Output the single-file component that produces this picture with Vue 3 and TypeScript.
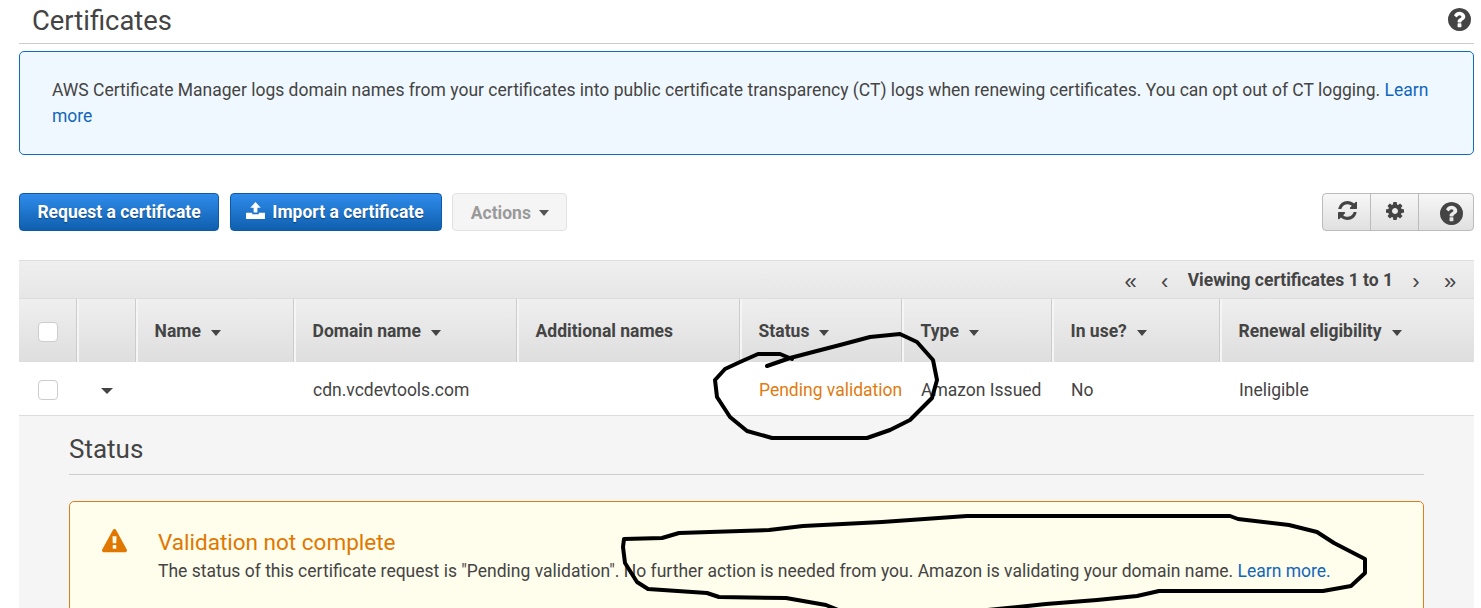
<script setup lang="ts">
// Table columns, the first two have no label
interface Column {
  label: string
  sortable: boolean
}

const columns: Column[] = [
  { label: 'Name', sortable: true },
  { label: 'Domain name', sortable: true },
  { label: 'Additional names', sortable: false },
  { label: 'Status', sortable: true },
  { label: 'Type', sortable: true },
  { label: 'In use?', sortable: true },
  { label: 'Renewal eligibility', sortable: true },
]

const helpPath = 'M1024 1376v-192q0-14-9-23t-23-9h-192q-14 0-23 9t-9 23v192q0 14 9 23t23 9h192q14 0 23-9t9-23zm256-672q0-88-55.5-163t-138.5-116-170-41q-243 0-371 213-15 24 8 42l132 100q7 6 19 6 16 0 25-12 53-68 86-92 34-24 86-24 48 0 85.5 26t37.5 59q0 38-20 61t-68 45q-63 28-115.5 86.5t-52.5 125.5v36q0 14 9 23t23 9h192q14 0 23-9t9-23q0-19 21.5-49.5t54.5-49.5q32-18 49-28.5t46-35 44.5-48 28-60.5 12.5-81zm384 192q0 209-103 385.5t-279.5 279.5-385.5 103-385.5-103-279.5-279.5-103-385.5 103-385.5 279.5-279.5 385.5-103 385.5 103 279.5 279.5 103 385.5z'

// Hand drawn marks on top of the screenshot
const statusMark = 'M767 366 L790 358 L813 352 L840 345 L870 337 L900 334 L917 342 L933 360 L937 380 L932 398 L910 420 L890 430 L867 438 L833 438 L772 438 L747 431 L730 417 L717 397 L715 380 L725 369 L740 362 L758 354 L780 354 L792 359'
const messageMark = 'M624 539 L662 538 L679 533 L769 530 L803 526 L882 522 L967 516 L1230 516 L1238 519 L1289 525 L1317 532 L1334 543 L1365 559 L1365 573 L1351 586 L1323 591 L1159 591 L1137 596 L1097 600 L1046 604 L1018 607 L967 612 L843 612 L826 605 L786 598 L719 597 L707 593 L648 589 L637 582 L625 563 L623 547 Z'
</script>

<template>
  <div class="page">
    <header class="page-title">
      <h1>Certificates</h1>
      <svg class="title-help" viewBox="128 128 1536 1536"><path :d="helpPath" /></svg>
    </header>

    <div class="info-box">
      AWS Certificate Manager logs domain names from your certificates into public certificate transparency (CT) logs when renewing certificates. You can opt out of CT logging. <a>Learn more</a>
    </div>

    <div class="toolbar">
      <button class="btn primary request">Request a certificate</button>
      <button class="btn primary import">
        <svg class="upload" viewBox="0 0 20 18">
          <path d="M10 0 L15.5 6 H12 V11 H8 V6 H4.5 Z" />
          <path d="M0 11.5 H6.5 V13 H13.5 V11.5 H20 V18 H0 Z" />
        </svg>
        Import a certificate
      </button>
      <button class="btn disabled">Actions <span class="caret"></span></button>
      <div class="tool-group">
        <button class="tool refresh">
          <svg viewBox="128 128 1536 1536"><path d="M1639 1056q0 5-1 7-64 268-268 434.5t-478 166.5q-146 0-282.5-55t-243.5-157l-129 129q-19 19-45 19t-45-19-19-45v-448q0-26 19-45t45-19h448q26 0 45 19t19 45-19 45l-137 137q71 66 161 102t187 36q134 0 250-65t186-179q11-17 53-117 8-23 30-23h192q13 0 22.5 9.5t9.5 22.5zm25-800v448q0 26-19 45t-45 19h-448q-26 0-45-19t-19-45 19-45l138-138q-148-137-349-137-134 0-250 65t-186 179q-11 17-53 117-8 23-30 23h-199q-13 0-22.5-9.5t-9.5-22.5v-7q65-268 270-434.5t480-166.5q146 0 284 55.5t245 156.5l130-129q19-19 45-19t45 19 19 45z" /></svg>
        </button>
        <button class="tool cog">
          <svg viewBox="128 128 1536 1536"><path d="M1152 896q0-106-75-181t-181-75-181 75-75 181 75 181 181 75 181-75 75-181zm512-109v222q0 12-8 23t-20 13l-185 28q-19 54-39 91 35 50 107 138 10 12 10 25t-9 23q-27 37-99 108t-94 71q-12 0-26-9l-138-108q-44 23-91 38-16 136-29 186-7 28-36 28h-222q-14 0-24.5-8.5t-11.5-21.5l-28-184q-49-16-90-37l-141 107q-10 9-25 9-14 0-25-11-126-114-165-168-7-10-7-23 0-12 8-23 15-21 51-66.5t54-70.5q-27-50-41-99l-183-27q-13-2-21-12.5t-8-23.5v-222q0-12 8-23t19-13l186-28q14-46 39-92-40-57-107-138-10-12-10-24 0-10 9-23 26-36 98.5-107.5t94.5-71.5q13 0 26 10l138 107q44-23 91-38 16-136 29-186 7-28 36-28h222q14 0 24.5 8.5t11.5 21.5l28 184q49 16 90 37l142-107q9-9 24-9 13 0 25 10 129 119 165 170 7 8 7 22 0 12-8 23-15 21-51 66.5t-54 70.5q26 50 41 98l183 28q13 2 21 12.5t8 23.5z" /></svg>
        </button>
        <button class="tool help">
          <svg viewBox="128 128 1536 1536"><path :d="helpPath" /></svg>
        </button>
      </div>
    </div>

    <div class="table">
      <div class="pager">
        <span class="page-arrow first">«</span>
        <span class="page-arrow">‹</span>
        <span class="page-label">Viewing certificates 1 to 1</span>
        <span class="page-arrow next">›</span>
        <span class="page-arrow">»</span>
      </div>

      <div class="row head">
        <div class="cell check"><span class="checkbox"></span></div>
        <div class="cell"></div>
        <div v-for="col in columns" :key="col.label" class="cell label">
          {{ col.label }}<span v-if="col.sortable" class="caret"></span>
        </div>
      </div>

      <div class="row body">
        <div class="cell check"><span class="checkbox"></span></div>
        <div class="cell expand"><span class="caret"></span></div>
        <div class="cell"></div>
        <div class="cell">cdn.vcdevtools.com</div>
        <div class="cell"></div>
        <div class="cell pending">Pending validation</div>
        <div class="cell">Amazon Issued</div>
        <div class="cell">No</div>
        <div class="cell">Ineligible</div>
      </div>

      <div class="detail">
        <h2>Status</h2>
        <div class="alert">
          <svg class="warn" viewBox="0 0 1792 1792"><path d="M1024 1375v-190q0-14-9.5-23.5t-22.5-9.5h-192q-13 0-22.5 9.5t-9.5 23.5v190q0 14 9.5 23.5t22.5 9.5h192q13 0 22.5-9.5t9.5-23.5zm-2-374l18-459q0-12-10-19-13-11-24-11h-220q-11 0-24 11-10 7-10 21l17 457q0 10 10 16.5t24 6.5h185q14 0 23.5-6.5t10.5-16.5zm-14-934l768 1408q35 63-2 126-17 29-46.5 46t-63.5 17h-1536q-34 0-63.5-17t-46.5-46q-37-63-2-126l768-1408q17-31 47-49t65-18 65 18 47 49z" /></svg>
          <div class="alert-text">
            <h3>Validation not complete</h3>
            <p>The status of this certificate request is "Pending validation". No further action is needed from you. Amazon is validating your domain name. <a>Learn more.</a></p>
          </div>
        </div>
      </div>
    </div>

    <svg class="marks" viewBox="0 0 1481 608">
      <path :d="statusMark" />
      <path :d="messageMark" />
    </svg>
  </div>
</template>

<style scoped>
.page {
  position: relative;
  box-sizing: border-box;
  height: 608px;
  overflow: hidden;
  padding: 0 7px 0 19px;
  background: #fff;
  font-family: Roboto, "Liberation Sans", sans-serif;
  font-size: 17.5px;
  color: #444;
}

.page-title {
  display: flex;
  justify-content: space-between;
  align-items: center;
  box-sizing: border-box;
  height: 44px;
  padding: 0 3px 1px 13px;
  border-bottom: 1px solid #ccc;
}

.page-title h1 {
  margin: 0;
  font-size: 27.4px;
  font-weight: 400;
  line-height: 40px;
  color: #444;
}

.title-help {
  width: 23px;
  height: 23px;
  margin-bottom: 3px;
  fill: #444;
}

.info-box {
  box-sizing: border-box;
  height: 104px;
  margin-top: 7px;
  padding: 25px 32px 0;
  background: #f0f8ff;
  border: 1px solid #0f6cb8;
  border-radius: 5px;
  line-height: 26px;
}

a {
  color: #1166bb;
}

.toolbar {
  display: flex;
  align-items: flex-start;
  margin-top: 38px;
  height: 67px;
}

.btn {
  box-sizing: border-box;
  height: 38px;
  border-radius: 4px;
  font: 700 17.5px Roboto, sans-serif;
  padding: 0;
}

.primary {
  color: #fff;
  background: linear-gradient(#2f8ceb, #0f5fae);
  border: 1px solid #0e5aa5;
  text-shadow: 0 1px 1px rgba(0, 0, 0, 0.4);
}

.request {
  width: 200px;
}

.import {
  width: 212px;
  margin-left: 11px;
  display: flex;
  align-items: center;
  justify-content: center;
  gap: 7px;
  padding-right: 2px;
}

.upload {
  width: 19px;
  height: 17px;
  fill: #fff;
  margin-top: -3px;
}

.disabled {
  width: 115px;
  margin-left: 10px;
  padding: 2px 0 0 1px;
  color: #9a9a9a;
  background: #f5f5f5;
  border: 1px solid #e2e2e2;
}

.disabled .caret {
  margin-left: 4px;
  vertical-align: 3px;
  border-top-color: #555;
}

.caret {
  display: inline-block;
  width: 0;
  height: 0;
  border-left: 5.5px solid transparent;
  border-right: 5.5px solid transparent;
  border-top: 6px solid #444;
}

.tool-group {
  display: flex;
  margin-left: auto;
  height: 38px;
  border: 1px solid #bbb;
  border-radius: 4px;
  box-sizing: border-box;
  overflow: hidden;
  background: linear-gradient(#f7f7f7, #e0e0e0);
}

.tool {
  box-sizing: border-box;
  display: flex;
  justify-content: center;
  padding: 0;
  border: 0;
  border-left: 1px solid #bbb;
  background: none;
}

.tool svg {
  fill: #444;
}

.refresh {
  width: 47px;
  border-left: 0;
  padding: 7px 0 0 2px;
}

.refresh svg {
  width: 19px;
  height: 19px;
}

.cog {
  width: 48px;
  padding-top: 8px;
}

.cog svg {
  width: 18px;
  height: 18px;
}

.help {
  width: 55px;
  padding: 8px 0 0 10px;
}

.help svg {
  width: 23px;
  height: 23px;
}

.table {
  display: flex;
  flex-direction: column;
}

.pager {
  box-sizing: border-box;
  height: 39px;
  display: flex;
  align-items: center;
  justify-content: flex-end;
  padding-right: 17px;
  gap: 16px;
  background: linear-gradient(#efefef, #e6e6e6);
  border-top: 1px solid #ddd;
  border-bottom: 1px solid #ddd;
  font-weight: 700;
  padding-top: 1px;
}

.page-arrow {
  font: 400 22px "Liberation Sans", sans-serif;
  width: 14px;
  text-align: center;
  margin-top: 3px;
}

.page-arrow.first {
  margin-right: 4px;
}

.page-arrow.next {
  margin-right: 4px;
}

.row {
  display: grid;
  grid-template-columns: 58px 59px 158px 223px 223px 162px 150px 168px 254px;
}

.head {
  height: 63px;
  background: linear-gradient(#efefef, #dedede);
  font-weight: 700;
}

.head .cell + .cell {
  border-left: 2px solid #f5f5f5;
  box-shadow: -1px 0 0 #ccc;
}

.cell {
  box-sizing: border-box;
  display: flex;
  align-items: center;
  padding-left: 19px;
  white-space: nowrap;
}

.head .label {
  padding-left: 16.6px;
  padding-top: 1px;
}

.head .label .caret {
  margin-left: 10px;
  margin-top: 3px;
}

.body {
  height: 54px;
  border-bottom: 1px solid #ddd;
  box-sizing: border-box;
}

.body .cell {
  padding-top: 2px;
}

.check {
  padding-left: 19px;
}

.head .check .checkbox {
  margin-top: 2px;
}

.checkbox {
  box-sizing: border-box;
  width: 20px;
  height: 20px;
  background: #fff;
  border: 1px solid #ccc;
  border-radius: 4px;
}

.expand {
  padding-left: 24px;
}

.expand .caret {
  margin-top: 3px;
  border-left-width: 6px;
  border-right-width: 6px;
}

.pending {
  color: #e07b10;
}

.detail {
  height: 260px;
  padding: 0 50px;
  background: #f5f5f5;
}

.detail h2 {
  margin: 0;
  padding-top: 17px;
  height: 59px;
  box-sizing: border-box;
  border-bottom: 1px solid #ccc;
  font-size: 26px;
  font-weight: 400;
  line-height: 32px;
  color: #444;
}

.alert {
  display: flex;
  box-sizing: border-box;
  height: 140px;
  margin-top: 26px;
  padding: 24px 32px;
  background: #fffdec;
  border: 1px solid #dd7f1d;
  border-radius: 5px;
}

.warn {
  width: 25px;
  height: 25px;
  fill: #e07700;
  margin-top: 3px;
}

.alert-text {
  margin-left: 31px;
}

.alert-text h3 {
  margin: 0;
  font-size: 22.5px;
  font-weight: 400;
  line-height: 32px;
  color: #e07700;
}

.alert-text p {
  margin: 1px 0 0;
  line-height: 24px;
}

.marks {
  position: absolute;
  left: 0;
  top: 0;
  width: 1481px;
  height: 608px;
  pointer-events: none;
}

.marks path {
  fill: none;
  stroke: #000;
  stroke-width: 4;
  stroke-linejoin: round;
  stroke-linecap: round;
}
</style>

<style>
html,
body {
  margin: 0;
  background: #fff;
}
</style>
